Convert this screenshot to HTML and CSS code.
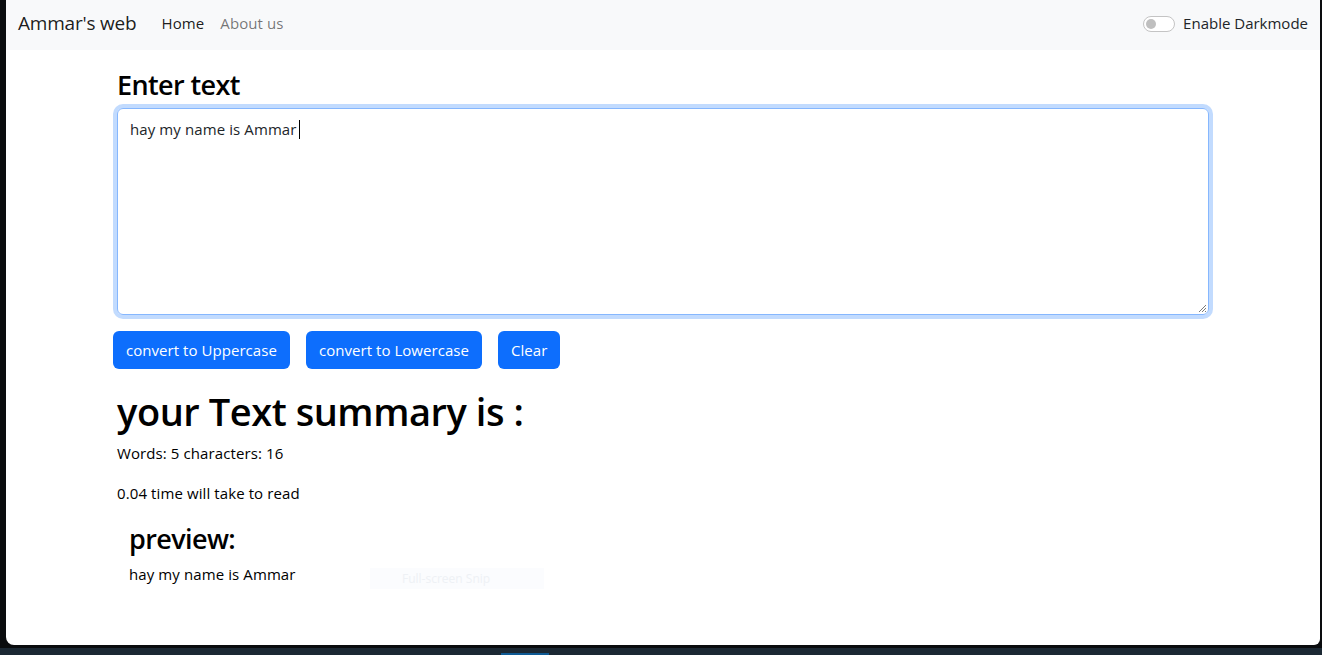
FILE: index.html
```html
<!DOCTYPE html>
<html lang="en">
<head>
<meta charset="utf-8">
<title>Ammar's web</title>
<link rel="stylesheet" href="styles.css">
</head>
<body>
<div class="screen">
  <div class="window">
    <nav class="navbar">
      <a class="brand" href="#">Ammar's web</a>
      <ul class="nav-links">
        <li><a class="nav-link active" href="#">Home</a></li>
        <li><a class="nav-link" href="#">About us</a></li>
      </ul>
      <label class="switch">
        <span class="switch-track"><span class="switch-knob"></span></span>
        <span class="switch-label">Enable Darkmode</span>
      </label>
    </nav>

    <main class="container">
      <h2 class="title">Enter text</h2>
      <div class="textarea">hay my name is Ammar <span class="caret"></span>
        <svg class="grip" width="9" height="9" viewBox="0 0 9 9"><path d="M1 8 L8 1 M4 8 L8 4 M7 8 L8 7" stroke="#7a7a7a" stroke-width="1"/></svg>
      </div>
      <div class="actions">
        <button class="btn">convert to Uppercase</button>
        <button class="btn">convert to Lowercase</button>
        <button class="btn">Clear</button>
      </div>

      <h1 class="summary-title">your Text summary is :</h1>
      <p class="line">Words: 5 characters: 16</p>
      <p class="line">0.04 time will take to read</p>

      <section class="preview">
        <h2 class="title">preview:</h2>
        <p class="preview-text">hay my name is Ammar</p>
        <div class="snip">Full-screen Snip</div>
      </section>
    </main>
  </div>
  <div class="taskbar"><span class="task-active"></span></div>
</div>
</body>
</html>
```

FILE: styles.css
```css
* { box-sizing: border-box; }

html, body {
  margin: 0;
  padding: 0;
  width: 1322px;
  height: 655px;
  overflow: hidden;
  background: #0a0c0e;
  font-family: "Open Sans", "Noto Sans", sans-serif;
  color: #212529;
}

.screen {
  width: 1322px;
  height: 655px;
  display: flex;
  flex-direction: column;
}

.window {
  margin-left: 6px;
  width: 1314px;
  height: 645px;
  background: #ffffff;
  border-radius: 0 0 6px 8px;
  overflow: hidden;
  position: relative;
}

.taskbar {
  margin-top: 3px;
  height: 7px;
  background: #1b2833;
  position: relative;
}

.task-active {
  position: absolute;
  left: 501px;
  bottom: 0;
  width: 48px;
  height: 2px;
  background: #0f5a94;
}

/* navbar */
.navbar {
  height: 50px;
  background: #f8f9fa;
  display: flex;
  align-items: center;
  padding: 0 12px 4px 12px;
}

.brand {
  font-size: 19px;
  color: rgba(0,0,0,.9);
  text-decoration: none;
  margin-right: 25px;
  letter-spacing: -0.2px;
}

.nav-links {
  list-style: none;
  margin: 0;
  padding: 0;
  display: flex;
  gap: 16px;
  flex: 1;
}

.nav-link {
  font-size: 15px;
  color: rgba(0,0,0,.55);
  text-decoration: none;
  letter-spacing: 0.1px;
}

.nav-link.active { color: rgba(0,0,0,.9); }

.switch {
  display: flex;
  align-items: center;
  gap: 8px;
  font-size: 15px;
  color: #212529;
}

.switch-track {
  width: 32px;
  height: 16px;
  border: 1px solid #c4c4c4;
  border-radius: 8px;
  background: #fff;
  display: flex;
  align-items: center;
  padding-left: 2px;
  margin-top: 2px;
}

.switch-knob {
  width: 10px;
  height: 10px;
  border-radius: 50%;
  background: #bfbfbf;
}

.switch-label { letter-spacing: 0; }

/* main */
.container {
  width: 1092px;
  margin: 0 auto;
}

.title {
  font-size: 27px;
  font-weight: 600;
  line-height: 1.2;
  margin: 19px 0 7px;
  color: #000;
  letter-spacing: -0.6px;
}

.textarea {
  position: relative;
  height: 207px;
  border: 1px solid #86b7fe;
  border-radius: 6px;
  box-shadow: 0 0 0 4px rgba(13,110,253,.25);
  padding: 8px 12px;
  font-size: 15px;
  line-height: 24px;
  color: #212529;
  letter-spacing: 0.1px;
}

.caret {
  display: inline-block;
  width: 1px;
  height: 19px;
  background: #000;
  vertical-align: -4px;
  margin-left: -2px;
}

.grip {
  position: absolute;
  right: 1px;
  bottom: 1px;
}

.actions {
  display: flex;
  gap: 16px;
  margin: 16px 0 0 -4px;
}

.btn {
  height: 38px;
  padding: 0 13px;
  background: #0d6efd;
  color: #fff;
  border: none;
  border-radius: 6px;
  font-family: inherit;
  font-size: 15px;
  letter-spacing: 0.05px;
}

.summary-title {
  font-size: 38px;
  font-weight: 600;
  line-height: 48px;
  margin: 18px 0 6px;
  color: #000;
  letter-spacing: -0.45px;
}

.line {
  font-size: 15px;
  line-height: 24px;
  margin: 0 0 16px;
  color: #000;
  letter-spacing: 0.1px;
}

.preview {
  padding: 2px 12px 0;
  position: relative;
}

.preview .title { margin-top: 0; margin-bottom: 6px; }

.preview-text {
  margin: 0;
  font-size: 15px;
  line-height: 24px;
  color: #000;
  letter-spacing: 0.1px;
}

.snip {
  position: absolute;
  left: 253px;
  top: 47px;
  width: 174px;
  height: 21px;
  background: #fbfcfe;
  color: #eef1f5;
  font-size: 12px;
  line-height: 21px;
  padding-left: 32px;
}
```
